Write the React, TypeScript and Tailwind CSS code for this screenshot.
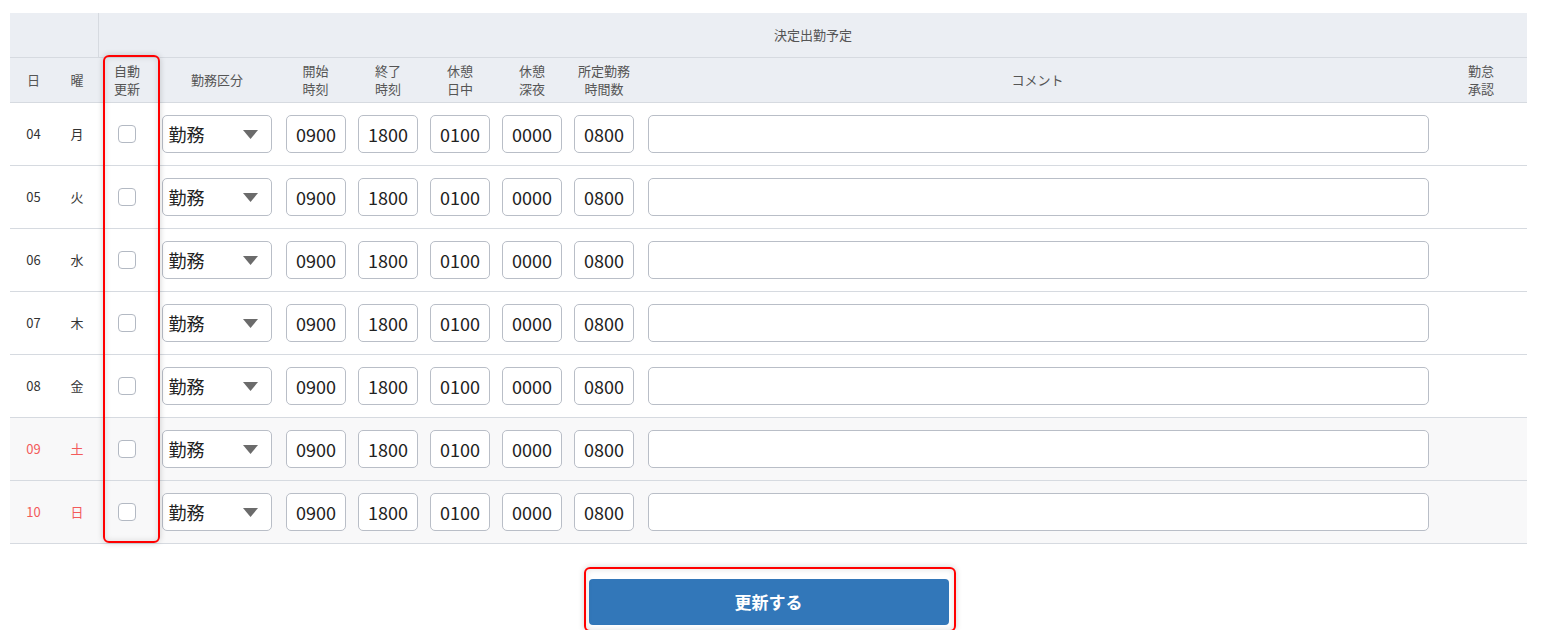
const rows = [
  { d: "04", w: "月", red: false },
  { d: "05", w: "火", red: false },
  { d: "06", w: "水", red: false },
  { d: "07", w: "木", red: false },
  { d: "08", w: "金", red: false },
  { d: "09", w: "土", red: true },
  { d: "10", w: "日", red: true },
];

const times = ["0900", "1800", "0100", "0000", "0800"];

const cols =
  "grid grid-cols-[45px_44px_56px_124px_73px_72px_72px_72px_72px_795px_92px]";

function TimeBox({ v }: { v: string }) {
  return (
    <div className="flex h-[38px] w-[60px] items-center justify-center rounded-[5px] border border-[#b9bec7] bg-white text-[18px] text-[#222]">
      {v}
    </div>
  );
}

export default function App() {
  return (
    <div
      className="relative bg-white pb-[5px] pl-[10px] pr-[17px] pt-[13px]"
      style={{ fontFamily: '"Noto Sans CJK JP", "Noto Sans", sans-serif' }}
    >
      {/* header row 1 */}
      <div className={`${cols} h-[45px] border-b border-[#d6dae0] bg-[#ebeef3] text-[13px] text-[#555]`}>
        <div className="col-span-2 border-r border-[#d6dae0]" />
        <div className="col-span-9 flex items-center justify-center">決定出勤予定</div>
      </div>

      {/* header row 2 */}
      <div className={`${cols} h-[45px] border-b border-[#d6dae0] bg-[#ebeef3] text-[13px] leading-[18px] text-[#555]`}>
        <div className="flex items-center justify-center pl-[2px]">日</div>
        <div className="flex items-center justify-center">曜</div>
        <div className="flex items-center justify-center text-center">自動<br />更新</div>
        <div className="flex items-center justify-center">勤務区分</div>
        <div className="flex items-center justify-center text-center">開始<br />時刻</div>
        <div className="flex items-center justify-center text-center">終了<br />時刻</div>
        <div className="flex items-center justify-center text-center">休憩<br />日中</div>
        <div className="flex items-center justify-center text-center">休憩<br />深夜</div>
        <div className="flex items-center justify-center text-center">所定勤務<br />時間数</div>
        <div className="flex items-center justify-center">コメント</div>
        <div className="flex items-center justify-center text-center">勤怠<br />承認</div>
      </div>

      {/* body */}
      {rows.map((r) => (
        <div
          key={r.d}
          className={`${cols} h-[63px] items-center border-b border-[#d6dae0] ${r.red ? "bg-[#f8f8f9]" : "bg-white"}`}
        >
          <div className={`text-center pl-[2px] text-[13px] ${r.red ? "text-[#f35b5b]" : "text-[#333]"}`}>{r.d}</div>
          <div className={`text-center text-[13px] ${r.red ? "text-[#f35b5b]" : "text-[#333]"}`}>{r.w}</div>
          <div className="flex justify-center">
            <div className="h-[18px] w-[18px] rounded-[4px] border border-[#b3b9c3] bg-white" />
          </div>
          <div className="flex justify-center pr-[1px]">
            <div className="flex h-[38px] w-[110px] items-center justify-between rounded-[5px] border border-[#b9bec7] bg-white pl-[6px] pr-[13px] text-[18px] text-[#222]">
              <span>勤務</span>
              <svg width="15" height="9" viewBox="0 0 15 9">
                <path d="M0 0h15L7.5 9z" fill="#6b6b6b" />
              </svg>
            </div>
          </div>
          {times.map((t, i) => (
            <div key={i} className={`flex ${i === 0 ? "justify-end pr-[6px]" : "justify-start pl-[6px]"}`}>
              <TimeBox v={t} />
            </div>
          ))}
          <div className="flex pl-[8px]">
            <div className="h-[38px] w-[781px] rounded-[5px] border border-[#b9bec7] bg-white" />
          </div>
          <div />
        </div>
      ))}

      {/* annotation on the 自動更新 column */}
      <div className="pointer-events-none absolute left-[103px] top-[55px] h-[488px] w-[57px] rounded-[6px] border-2 border-[#ff0000] shadow-[0_0_6px_rgba(0,0,0,0.18),inset_0_0_6px_rgba(0,0,0,0.12)]" />

      {/* button */}
      <div className="flex justify-center pt-[35px]">
        <div className="relative">
          <button className="h-[46px] w-[360px] rounded-[4px] bg-[#3277b9] text-[17px] font-bold text-white">
            更新する
          </button>
          <div className="pointer-events-none absolute -bottom-[7px] -left-[5px] -right-[7px] -top-[12px] rounded-[6px] border-2 border-[#ff0000] shadow-[0_0_6px_rgba(0,0,0,0.18),inset_0_0_6px_rgba(0,0,0,0.12)]" />
        </div>
      </div>
    </div>
  );
}
